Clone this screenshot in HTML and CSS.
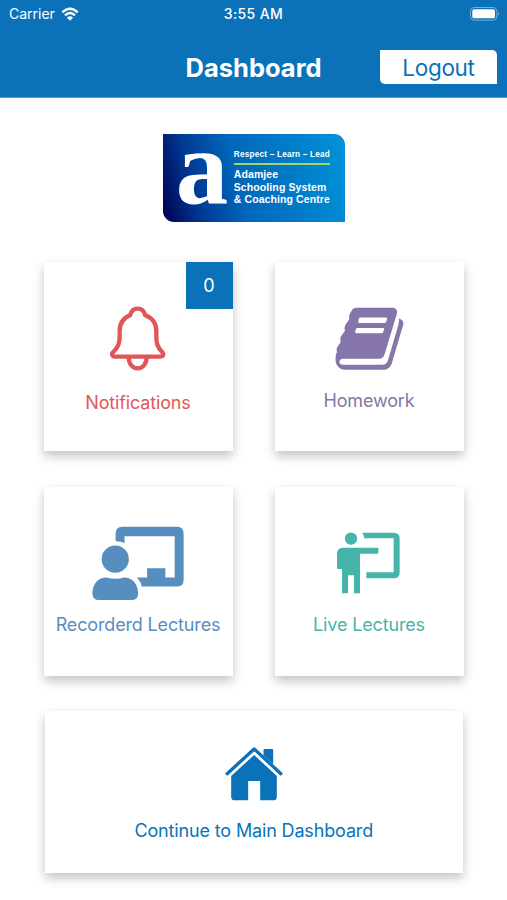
FILE: index.html
```
<!DOCTYPE html>
<html lang="en">
<head>
  <meta charset="UTF-8" />
  <meta name="viewport" content="width=device-width, initial-scale=1.0" />
  <title>Dashboard</title>
  <link rel="stylesheet" href="styles.css">
</head>
<body>
  <header>
    <div class="status-bar">
      <div class="carrier">
        <span>Carrier</span>
        <svg class="wifi" viewBox="0 0 54 42">
          <path d="M4 16 Q27 -6 50 16" />
          <path d="M12 25 Q27 11 42 25" />
          <path class="dot" d="M18 32 Q27 24 36 32 L27 41 Z" />
        </svg>
      </div>
      <span class="time">3:55 AM</span>
      <svg class="battery" viewBox="0 0 90 42">
        <rect class="outline" x="1.5" y="1.5" width="79" height="38" rx="11" />
        <rect class="level" x="7" y="7" width="68" height="27" rx="5" />
        <path class="level tip" d="M84 14 Q90 20 84 27 Z" />
      </svg>
    </div>
    <div class="title-bar">
      <h1>Dashboard</h1>
      <button class="logout">Logout</button>
    </div>
  </header>

  <main>
    <div class="logo">
      <span class="logo-letter">a</span>
      <div class="logo-text">
        <div class="motto">Respect – Learn – Lead</div>
        <div class="school">Adamjee<br>Schooling System<br>&amp; Coaching Centre</div>
      </div>
    </div>

    <div class="cards">
      <a class="card notifications">
        <span class="badge">0</span>
        <svg class="icon" viewBox="0 0 168 195">
          <path d="M16 152 H150 C161 152 162 143 156 138 C141 122 139 110 139 90 V75 C139 50 126 36 106 28 C102 13 93 8 83 8 C73 8 64 13 60 28 C40 36 29 50 29 75 V90 C29 110 26 122 10 138 C3 143 6 152 16 152 Z" />
          <path d="M56 152 C56 174 68 187 83 187 S110 174 110 152" />
        </svg>
        <span class="label">Notifications</span>
      </a>
      <a class="card homework">
        <svg class="icon" viewBox="0 0 208 194">
          <path d="M62 4 H172 C184 4 190 12 186 24 L150 143 C147 153 142 158 132 158 H22 C10 160 10 176 24 176 H142 C152 176 157 172 160 162 L191 56 C194 46 193 41 192 37 C204 40 208 48 205 58 L171 172 C166 184 158 191 146 191 H32 C12 191 -1 176 2 154 Q1 147 6 138 Q3 131 6 124 L17 108 Q14 98 18 90 L30 74 Q27 64 31 56 L43 39 Q40 30 45 22 L53 9 Q56 4 62 4 Z" />
          <path class="line" d="M76 34 H154 Q158 34 157 38 L154 47 Q153 50 149 50 H73 Q69 50 70 46 L72 37 Q73 34 76 34 Z" />
          <path class="line" d="M67 65 H144 Q149 65 148 69 L145 78 Q144 81 140 81 H64 Q60 81 61 77 L63 68 Q64 65 67 65 Z" />
        </svg>
        <span class="label">Homework</span>
      </a>
      <a class="card recorded">
        <svg class="icon" viewBox="0 0 280 226">
          <path d="M71 46 V22 Q71 2 91 2 H257 Q276 2 276 22 V162 Q276 182 257 182 H150 Q147 167 135 155 H166 V127 H221 V155 H249 V31 H98 V51 Q84 45 71 46 Z" />
          <circle cx="70" cy="100" r="41" />
          <path d="M44 155 Q70 163 96 155 C124 155 139 177 139 204 Q137 223 120 223 H20 Q3 223 1 204 C1 177 16 155 44 155 Z" />
        </svg>
        <span class="label">Recorderd Lectures</span>
      </a>
      <a class="card live">
        <svg class="icon" viewBox="0 0 192 186">
          <circle cx="45" cy="20" r="18.5" />
          <path d="M20 47 H125 Q127 47 127 49 V63 Q127 65 125 65 H72 V182 Q72 184 70 184 H56 Q54 184 54 182 V130 H36 V182 Q36 184 34 184 H20 Q18 184 18 182 V111 H5 Q3 111 3 109 V67 Q3 47 20 47 Z" />
          <path d="M79 2 H173 Q191 2 191 20 V121 Q191 139 173 139 H91 V121 H173 V19 H84 Q84 10 79 2 Z" />
        </svg>
        <span class="label">Live Lectures</span>
      </a>
    </div>

    <a class="card main-dashboard">
      <svg class="icon" viewBox="0 0 173 165">
        <path class="roof" d="M6 83 L87 9 L167 83" />
        <path d="M115 28 V12 Q115 9 118 9 H141 Q144 9 144 12 V55 Z" />
        <path d="M87 27 L18 90 V152 Q18 163 29 163 H69 V105 H105 V163 H144 Q155 163 155 152 V90 Z" />
      </svg>
      <span class="label">Continue to Main Dashboard</span>
    </a>
  </main>
</body>
</html>
```

FILE: styles.css
```
* {
  box-sizing: border-box;
}
body {
  font-family: Inter, "Liberation Sans", sans-serif;
  margin: 0;
  background: #fff;
}
svg {
  display: block;
  overflow: visible;
}
header {
  height: 98px;
  background-color: #0b72b9;
  border-bottom: 1px solid #4c9ace;
  color: white;
}
.status-bar {
  display: grid;
  grid-template-columns: 1fr auto 1fr;
  align-items: center;
  height: 27px;
  padding: 0 7px 0 9px;
  font-size: 14px;
}
.carrier {
  display: flex;
  align-items: center;
  gap: 6px;
}
.wifi {
  width: 18px;
  height: 14px;
  fill: none;
  stroke: white;
  stroke-width: 7;
}
.wifi .dot {
  fill: white;
  stroke: none;
}
.time {
  margin-right: 2px;
  font-weight: 500;
  letter-spacing: 0.4px;
}
.battery {
  width: 30px;
  height: 14px;
  justify-self: end;
}
.battery .outline {
  fill: none;
  stroke: #75afd8;
  stroke-width: 3;
}
.battery .level {
  fill: white;
}
.battery .tip {
  fill: #75afd8;
}
.title-bar {
  display: grid;
  grid-template-columns: 1fr auto 1fr;
  align-items: center;
  height: 66px;
  margin-top: 7px;
  padding: 0 10px;
}
h1 {
  grid-column: 2;
  margin: 0;
  font-size: 25.5px;
  font-weight: 700;
}
.logout {
  justify-self: end;
  width: 117px;
  height: 34px;
  padding: 0;
  border: none;
  border-radius: 0 5px 0 5px;
  background: white;
  color: #0b72b9;
  font-family: inherit;
  font-size: 22.5px;
  letter-spacing: -0.3px;
}
main {
  padding: 36px 43px 27px 43.5px;
}
.logo {
  display: flex;
  width: 182px;
  height: 88px;
  margin: 0 auto;
  padding-left: 13px;
  border-radius: 0 11px 0 11px;
  background: linear-gradient(75deg, #000050 0%, #003a94 20%, #0067ba 42%, #007cc8 70%, #0094d9 100%);
  color: white;
  font-family: "Liberation Sans", sans-serif;
  font-weight: bold;
}
.logo-letter {
  width: 58px;
  font-family: "Liberation Serif", serif;
  font-size: 105px;
  line-height: 67px;
}
.logo-text {
  padding-top: 16px;
  white-space: nowrap;
}
.motto {
  width: 96px;
  padding-bottom: 3px;
  border-bottom: 2px solid #a4d65e;
  font-size: 8.2px;
  letter-spacing: 0.22px;
  line-height: 10px;
}
.school {
  margin-top: 3px;
  font-size: 10.5px;
  letter-spacing: 0.1px;
  line-height: 12.5px;
}
.cards {
  display: grid;
  grid-template-columns: 189px 189px;
  gap: 36px 42px;
  margin-top: 40px;
}
.card {
  position: relative;
  display: flex;
  flex-direction: column;
  align-items: center;
  height: 189px;
  background: white;
  box-shadow: 0 5px 10px rgba(0, 0, 0, 0.24);
  fill: currentColor;
}
.label {
  font-size: 18px;
  letter-spacing: -0.15px;
  line-height: 24px;
  white-space: nowrap;
}
.badge {
  position: absolute;
  top: 0;
  right: 0;
  width: 47px;
  height: 47px;
  background: #0b72b9;
  color: white;
  font-size: 18px;
  line-height: 48px;
  text-align: center;
}
.notifications {
  padding-top: 44px;
  color: #e15759;
}
.notifications .icon {
  width: 56px;
  height: 65px;
  margin-bottom: 20px;
  fill: none;
  stroke: currentColor;
  stroke-width: 13;
}
.homework {
  padding-top: 44px;
  color: #8675a9;
}
.homework .icon {
  width: 69px;
  height: 65px;
  margin-bottom: 18px;
}
.homework .line {
  fill: white;
}
.recorded {
  padding-top: 39px;
  color: #568ebf;
}
.recorded .icon {
  width: 93px;
  height: 75px;
  margin-bottom: 12px;
}
.live {
  padding-top: 45px;
  color: #45b5aa;
}
.live .icon {
  width: 64px;
  height: 62px;
  margin: 0 3px 19px 0;
}
.main-dashboard {
  height: 162px;
  margin: 35px 1px 0;
  padding-top: 35px;
  color: #0b72b9;
}
.main-dashboard .icon {
  width: 58px;
  height: 55px;
  margin-bottom: 18px;
}
.main-dashboard .roof {
  fill: none;
  stroke: currentColor;
  stroke-width: 10;
  stroke-linecap: round;
  stroke-linejoin: round;
}
```
